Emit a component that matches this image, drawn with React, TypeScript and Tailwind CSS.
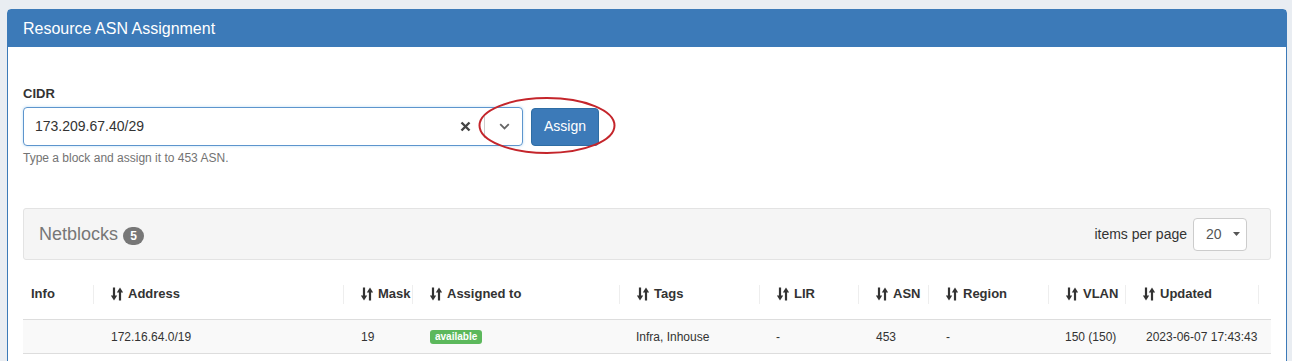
import React from "react";

const SortIcon = () => (
  <svg width="12" height="14" viewBox="0 0 12 14" className="mr-[5px] shrink-0">
    <path d="M3 0.5v8.5" stroke="#333" strokeWidth="2.2" />
    <path d="M-0.2 8.5h6.4l-3.2 5z" fill="#333" />
    <path d="M9 13.5v-8.5" stroke="#333" strokeWidth="2.2" />
    <path d="M5.8 5.5h6.4l-3.2-5z" fill="#333" />
  </svg>
);

const cols: { label: string; sort: boolean }[] = [
  { label: "Info", sort: false },
  { label: "Address", sort: true },
  { label: "Mask", sort: true },
  { label: "Assigned to", sort: true },
  { label: "Tags", sort: true },
  { label: "LIR", sort: true },
  { label: "ASN", sort: true },
  { label: "Region", sort: true },
  { label: "VLAN", sort: true },
  { label: "Updated", sort: true },
];

const grid =
  "grid grid-cols-[71px_250px_69px_207px_140px_99px_70px_120px_77px_133px_1fr]";

export default function App() {
  return (
    <div
      className="min-h-screen bg-[#e9edf2] pt-[9px] pl-[7px] pr-[5px] text-[#333]"
      style={{ fontFamily: '"Liberation Sans", Arial, sans-serif' }}
    >
      <div className="border border-[#3c7ab8] rounded-t-[4px] bg-white min-h-[360px]">
        <div className="bg-[#3c7ab8] h-[37px] px-[15px] flex items-center text-white text-[16px]">
          Resource ASN Assignment
        </div>
        <div className="px-[15px] pt-[38px]">
          <div className="text-[13px] font-bold leading-[18px] mb-[4px]">CIDR</div>
          <div className="relative flex items-center">
            <div className="w-[500px] h-[39px] border border-[#5d95cd] rounded-[4px] flex items-center shadow-[0_0_3px_rgba(102,175,233,0.45)]">
              <span className="flex-1 pl-[11px] text-[14px] text-[#333]">173.209.67.40/29</span>
              <svg width="11" height="11" viewBox="0 0 11 11">
                <path d="M1.5 1.5l8 8M9.5 1.5l-8 8" stroke="#444" strokeWidth="2.4" />
              </svg>
              <div className="ml-[13px] w-px h-[23px] bg-[#ccc]" />
              <svg width="11" height="7" viewBox="0 0 11 7" className="ml-[14px]">
                <path d="M1.2 1.2l4.3 4.3 4.3-4.3" stroke="#666" strokeWidth="1.8" fill="none" />
              </svg>
              <div className="w-[12px]" />
            </div>
            <button className="ml-[8px] w-[68px] h-[38px] bg-[#3c7ab8] border border-[#2e6da4] rounded-[4px] text-white text-[14px]">
              Assign
            </button>
            <svg
              width="140"
              height="60"
              viewBox="0 0 140 60"
              className="absolute left-[454px] top-[-11px] pointer-events-none"
            >
              <ellipse cx="70" cy="29.5" rx="67.5" ry="27.5" stroke="#c4252b" strokeWidth="2" fill="none" />
            </svg>
          </div>
          <div className="mt-[4px] text-[12px] leading-[17px] text-[#737373]">
            Type a block and assign it to 453 ASN.
          </div>

          <div className="mt-[41px] h-[52px] border border-[#e3e3e3] bg-[#f5f5f5] rounded-[3px] flex items-center pl-[15px] pr-[23px]">
            <span className="text-[18px] text-[#777]">Netblocks</span>
            <span className="ml-[5px] mt-[3px] h-[18px] min-w-[21px] px-[7px] rounded-[10px] bg-[#777] text-white text-[12px] font-bold flex items-center justify-center">
              5
            </span>
            <div className="flex-1" />
            <span className="text-[14px] text-[#333]">items per page</span>
            <div className="ml-[6px] w-[54px] h-[33px] bg-white border border-[#ccc] rounded-[4px] flex items-center pl-[12px] text-[14px] text-[#555]">
              <span>20</span>
              <svg width="7" height="4" viewBox="0 0 7 4" className="ml-[11px]">
                <path d="M0 0h7L3.5 4z" fill="#555" />
              </svg>
            </div>
          </div>

          <div className={`${grid} h-[60px] border-b border-[#ddd]`}>
            {cols.map((c, i) => (
              <div
                key={c.label}
                className={`flex items-center pt-[9px] ${i === 0 ? "pl-[8px]" : "pl-[17px]"}`}
              >
                <div className="flex-1 flex items-center text-[13px] font-bold leading-[16px]">
                  {c.sort && <SortIcon />}
                  <span>{c.label}</span>
                </div>
                <div className="w-px h-[19px] bg-[#eee]" />
              </div>
            ))}
            <div />
          </div>

          <div className={`${grid} h-[34px] border-b border-[#ddd] bg-[#f9f9f9] text-[12px] text-[#333] items-center`}>
            <div className="pl-[8px]" />
            <div className="pl-[17px]">172.16.64.0/19</div>
            <div className="pl-[17px]">19</div>
            <div className="pl-[17px] flex">
              <span className="bg-[#5cb85c] text-white font-bold text-[10px] leading-[14px] px-[5px] rounded-[3px]">
                available
              </span>
            </div>
            <div className="pl-[16px]">Infra, Inhouse</div>
            <div className="pl-[16px]">-</div>
            <div className="pl-[17px]">453</div>
            <div className="pl-[17px]">-</div>
            <div className="pl-[16px]">150 (150)</div>
            <div className="pl-[20px]">2023-06-07 17:43:43</div>
            <div />
          </div>
        </div>
      </div>
    </div>
  );
}
